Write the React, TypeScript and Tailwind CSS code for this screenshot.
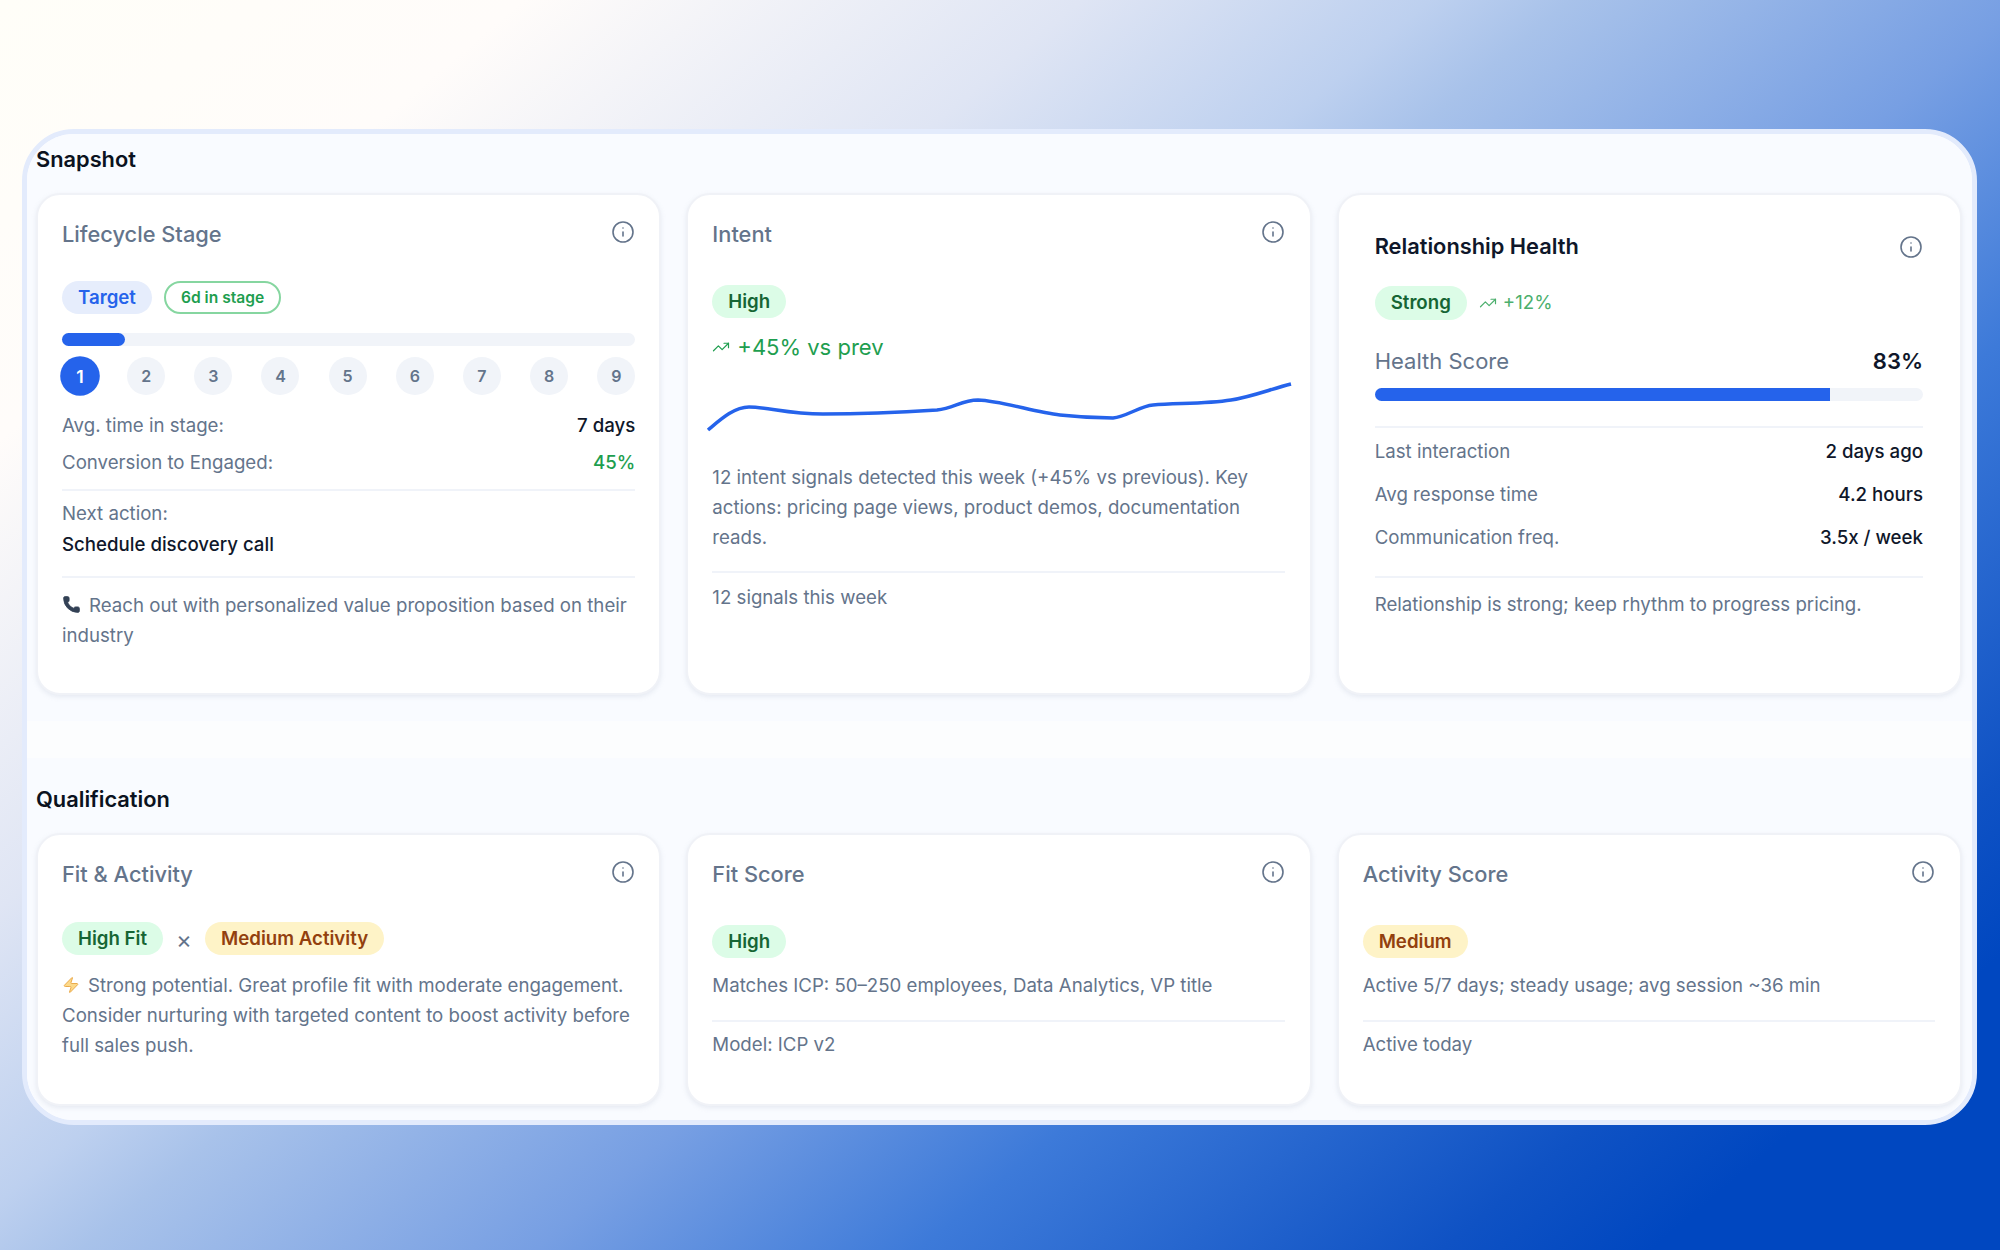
import { Info, TrendingUp, Phone, Zap } from "lucide-react";
import type { ReactNode } from "react";

function Card({ title, dark, className, children }: { title: string; dark?: boolean; className: string; children: ReactNode }) {
  return (
    <div className={`bg-white rounded-[24px] border-2 border-[#f0f2f7] shadow-[0_2px_5px_rgba(148,163,184,0.18)] ${className}`}>
      <div className="flex items-start justify-between">
        <div className={`text-[21.8px] leading-[32px] ${dark ? "font-semibold text-[#0f172a]" : "font-medium text-[#64748b]"}`}>{title}</div>
        <Info size={24} strokeWidth={1.6} className={`text-[#64748b] shrink-0 ${dark ? "mt-[5px]" : "mt-[2px]"}`} />
      </div>
      {children}
    </div>
  );
}

function Pill({ tone, className, children }: { tone: "green" | "amber" | "blue"; className?: string; children: ReactNode }) {
  const t = tone === "green" ? "bg-[#dcfce7] text-[#166534]" : tone === "amber" ? "bg-[#fef3c7] text-[#92400e]" : "bg-[#e6edfc] text-[#2563eb]";
  return <span className={`inline-flex items-center justify-center h-[33px] rounded-full px-[16px] text-[18.67px] font-semibold ${t} ${className ?? ""}`}>{children}</span>;
}

function Row({ label, value, valueClass, className }: { label: string; value: string; valueClass?: string; className?: string }) {
  return (
    <div className={`flex justify-between text-[18.67px] leading-[30px] ${className ?? ""}`}>
      <span className="text-[#64748b]">{label}</span>
      <span className={`font-medium ${valueClass ?? "text-[#0f172a]"}`}>{value}</span>
    </div>
  );
}

function Divider({ className }: { className: string }) {
  return <div className={`h-[2px] bg-[#f0f3f9] ${className}`} />;
}

export default function App() {
  return (
    <div className="w-[2000px] h-[1250px] overflow-hidden pt-[129px] pl-[22px] bg-[linear-gradient(140deg,#fffef8_0%,#fffcfa_15%,#dfe5f4_31%,#bdd0ef_41%,#a8c2ea_45%,#779fe3_58%,#3d7ad9_69%,#0f52c4_84%,#0047c0_90%,#0047c0_100%)] font-['Inter',sans-serif]">
      <div className="w-[1955px] h-[996px] rounded-[52px] border-[5px] border-[#e3ebfc] bg-[#fcfdfe] overflow-hidden flex flex-col">
        <section className="h-[587px] bg-[#f9fbff] pl-[9px] pr-[10px]">
          <h2 className="h-[59px] pt-[11px] text-[21.8px] leading-[28px] font-semibold text-[#0b1220]">Snapshot</h2>
          <div className="grid grid-cols-3 gap-[25px]">
            <Card title="Lifecycle Stage" className="h-[502px] pl-[24px] pr-[24px] pt-[23px]">
              <div className="flex items-center gap-[12px] mt-[31px]">
                <Pill tone="blue">Target</Pill>
                <span className="inline-flex items-center h-[33px] rounded-full border-2 border-[#86d6a0] px-[15px] text-[15.6px] font-semibold text-[#1e9e4f]">6d in stage</span>
              </div>
              <div className="h-[13px] rounded-full bg-[#f1f4f9] mt-[19px]">
                <div className="h-full w-[11%] rounded-full bg-[#2563eb]" />
              </div>
              <div className="flex justify-between mt-[11px]">
                {[1, 2, 3, 4, 5, 6, 7, 8, 9].map((n) => (
                  <span key={n} className={n === 1 ? "w-[36px] h-[36px] my-[1px] scale-110 rounded-full bg-[#2563eb] text-white flex items-center justify-center text-[16px] font-semibold" : "w-[38px] h-[38px] rounded-full bg-[#f1f4f9] text-[#64748b] flex items-center justify-center text-[16px] font-semibold"}>{n}</span>
                ))}
              </div>
              <Row label="Avg. time in stage:" value="7 days" className="mt-[16px]" />
              <Row label="Conversion to Engaged:" value="45%" valueClass="text-[#1e9e4f]" className="mt-[7px]" />
              <Divider className="mt-[11px]" />
              <div className="text-[18.67px] leading-[30px] text-[#64748b] mt-[8px]">Next action:</div>
              <div className="text-[18.67px] leading-[30px] font-medium text-[#0f172a] mt-[1px]">Schedule discovery call</div>
              <Divider className="mt-[16px]" />
              <p className="text-[18.67px] leading-[30px] text-[#64748b] mt-[13px]">
                <Phone size={19} fill="#334155" strokeWidth={1} className="inline-block text-[#334155] mr-[8px] align-[-2px]" />
                Reach out with personalized value proposition based on their industry
              </p>
            </Card>
            <Card title="Intent" className="h-[502px] pl-[24px] pr-[25px] pt-[23px]">
              <div className="mt-[35px] flex"><Pill tone="green">High</Pill></div>
              <div className="flex items-center gap-[7px] mt-[12px] text-[22px] leading-[34px] text-[#1e9e4f]">
                <TrendingUp size={18} strokeWidth={1.6} />
                <span>+45% vs prev</span>
              </div>
              <svg viewBox="0 0 590 60" className="w-[590px] h-[60px] ml-[-6px] mt-[9px] overflow-visible" fill="none">
                <path d="M2 57 C 14 47, 28 34, 43 34 C 62 34, 82 41, 117 41 C 160 41, 200 39, 231 37 C 248 35, 256 27, 272 27 C 296 28, 328 39, 354 42 C 372 44, 392 45, 407 45 C 420 44, 434 33, 447 32 C 470 30, 500 31, 525 27 C 545 24, 565 16, 585 11" stroke="#2563eb" strokeWidth="3.5" strokeLinecap="butt" />
              </svg>
              <p className="text-[18.67px] leading-[30px] text-[#64748b] mt-[30px]">12 intent signals detected this week (+45% vs previous). Key actions: pricing page views, product demos, documentation reads.</p>
              <Divider className="mt-[18px]" />
              <div className="text-[18.67px] leading-[30px] text-[#64748b] mt-[10px]">12 signals this week</div>
            </Card>
            <Card title="Relationship Health" dark className="h-[502px] pl-[36px] pr-[37px] pt-[35px]">
              <div className="flex items-center gap-[12px] mt-[24px]">
                <Pill tone="green" className="h-[34px]">Strong</Pill>
                <span className="flex items-center gap-[6px] text-[18.67px] text-[#4caf6d]">
                  <TrendingUp size={18} strokeWidth={1.6} />
                  +12%
                </span>
              </div>
              <div className="flex justify-between items-center mt-[25px] text-[22px] leading-[32px]">
                <span className="text-[#64748b]">Health Score</span>
                <span className="font-semibold text-[#0f172a]">83%</span>
              </div>
              <div className="h-[13px] rounded-full bg-[#f1f4f9] mt-[11px] overflow-hidden">
                <div className="h-full w-[83%] bg-[#2563eb]" />
              </div>
              <Divider className="mt-[25px]" />
              <Row label="Last interaction" value="2 days ago" className="mt-[9px]" />
              <Row label="Avg response time" value="4.2 hours" className="mt-[13px]" />
              <Row label="Communication freq." value="3.5x / week" className="mt-[13px]" />
              <Divider className="mt-[23px]" />
              <p className="text-[18.67px] leading-[30px] text-[#64748b] mt-[12px]">Relationship is strong; keep rhythm to progress pricing.</p>
            </Card>
          </div>
        </section>
        <section className="mt-[37px] flex-1 bg-[#f9fbff] pl-[9px] pr-[10px]">
          <h2 className="h-[75px] pt-[27px] text-[21.8px] leading-[28px] font-semibold text-[#0b1220]">Qualification</h2>
          <div className="grid grid-cols-3 gap-[25px]">
            <Card title="Fit & Activity" className="h-[273px] pl-[24px] pr-[24px] pt-[23px] border-[#e2eafa]">
              <div className="flex items-center mt-[32px]">
                <Pill tone="green">High Fit</Pill>
                <span className="w-[42px] text-center text-[24px] leading-[24px] text-[#64748b] mt-[3px]">×</span>
                <Pill tone="amber">Medium Activity</Pill>
              </div>
              <p className="text-[18.67px] leading-[30px] text-[#64748b] mt-[16px]">
                <Zap size={18} strokeWidth={1.2} className="inline-block text-[#e8a33d] fill-[#fcd98a] mr-[8px] align-[-2px]" />
                Strong potential. Great profile fit with moderate engagement. Consider nurturing with targeted content to boost activity before full sales push.
              </p>
            </Card>
            <Card title="Fit Score" className="h-[273px] pl-[24px] pr-[25px] pt-[23px]">
              <div className="flex mt-[35px]"><Pill tone="green">High</Pill></div>
              <p className="text-[18.67px] leading-[30px] text-[#64748b] mt-[13px]">Matches ICP: 50–250 employees, Data Analytics, VP title</p>
              <Divider className="mt-[19px]" />
              <div className="text-[18.67px] leading-[30px] text-[#64748b] mt-[8px]">Model: ICP v2</div>
            </Card>
            <Card title="Activity Score" className="h-[273px] pl-[24px] pr-[25px] pt-[23px]">
              <div className="flex mt-[35px]"><Pill tone="amber">Medium</Pill></div>
              <p className="text-[18.67px] leading-[30px] text-[#64748b] mt-[13px]">Active 5/7 days; steady usage; avg session ~36 min</p>
              <Divider className="mt-[19px]" />
              <div className="text-[18.67px] leading-[30px] text-[#64748b] mt-[8px]">Active today</div>
            </Card>
          </div>
        </section>
      </div>
    </div>
  );
}
